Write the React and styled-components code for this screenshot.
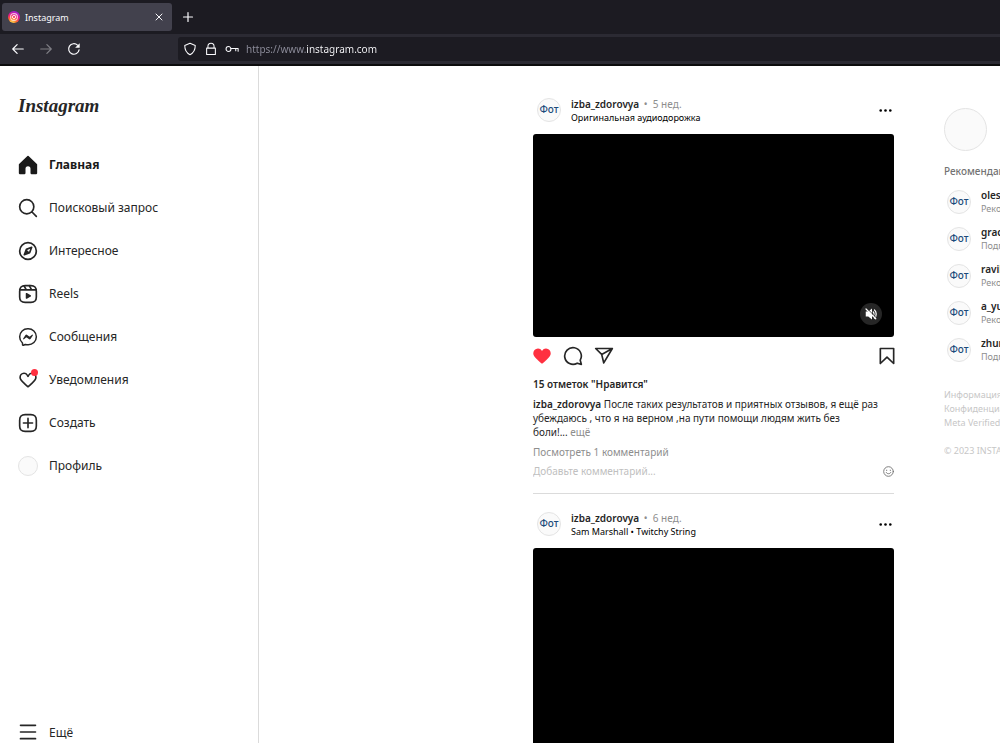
import React from 'react'
import styled, { createGlobalStyle } from 'styled-components'

const GlobalStyle = createGlobalStyle`
    *{
    box-sizing: border-box;
    }
    body{
    margin: 0;
    background: #ffffff;
    color: #262626;
    font-family: "Noto Sans", "Open Sans", sans-serif;
    font-size: 10px;
    }
    button, input{
    font-family: inherit;
    padding: 0;
    border: none;
    background: none;
    outline: none;
    }
    button{
    display: flex;
    color: inherit;
    cursor: pointer;
    }
    a{
    color: inherit;
    text-decoration: none;
    }
    svg{
    display: block;
    flex-shrink: 0;
    }
`

const Window = styled.div`
    display: flex;
    flex-direction: column;
    height: 100vh;
    overflow: hidden;
`

const TabBar = styled.div`
    display: flex;
    align-items: center;
    gap: 10px;
    height: 34px;
    flex-shrink: 0;
    padding: 0 2px;
    background: #1c1b22;
    color: #fbfbfe;
`

const Tab = styled.div`
    display: flex;
    align-items: center;
    gap: 5px;
    width: 170px;
    height: 28px;
    padding: 0 7px 0 6px;
    border-radius: 3px;
    background: #42414d;
    font-size: 9px;

    span{
    flex: 1;
    }
`

const Toolbar = styled.div`
    display: flex;
    align-items: center;
    height: 32px;
    flex-shrink: 0;
    background: #2b2a33;
    border-bottom: 2px solid #0c0c0d;
    color: #fbfbfe;
`

const NavButtons = styled.div`
    display: flex;
    gap: 14px;
    width: 178px;
    padding-left: 11px;
`

const ToolButton = styled.button`
    opacity: ${props => (props.disabled ? 0.4 : 1)};
`

const AddressBar = styled.div`
    display: flex;
    align-items: center;
    flex: 1;
    gap: 7px;
    height: 24px;
    padding-left: 5px;
    border-radius: 3px 0 0 3px;
    background: #1c1b22;
`

/* scheme and subdomain are dimmed, the domain is bright */
const AddressInput = styled.input`
    flex: 1;
    min-width: 0;
    font-size: 10px;
    color: transparent;
    background: linear-gradient(90deg, #8f8f9d 60px, #fbfbfe 60px);
    background-clip: text;
    -webkit-background-clip: text;
`

const Page = styled.div`
    display: flex;
    flex: 1;
    min-height: 0;
`

const Sidebar = styled.nav`
    display: flex;
    flex-direction: column;
    width: 259px;
    flex-shrink: 0;
    padding: 28px 18px 0;
    border-right: 1px solid #dbdbdb;
`

const Logo = styled.a`
    height: 27px;
    margin-bottom: 22px;
    line-height: 24px;
    font-family: "Liberation Serif", serif;
    font-size: 19px;
    font-style: italic;
    font-weight: bold;
`

const NavItem = styled.a`
    position: relative;
    display: flex;
    align-items: center;
    gap: 11px;
    height: 43px;
    font-size: 12px;
    font-weight: ${props => (props.$active ? 700 : 400)};
    color: ${props => (props.$active ? '#1a1a1a' : '#262626')};
`

const NavBottom = styled.div`
    margin-top: auto;

    button{
    align-items: center;
    gap: 11px;
    height: 22px;
    font-size: 12px;
    }
`

const Dot = styled.i`
    position: absolute;
    left: 13px;
    top: 11px;
    width: 7px;
    height: 7px;
    border-radius: 50%;
    background: #ff3040;
`

const Avatar = styled.span`
    display: flex;
    justify-content: center;
    flex-shrink: 0;
    width: ${props => props.$size}px;
    height: ${props => props.$size}px;
    border: 1px solid #e4e4e4;
    border-radius: 50%;
    background: #fafafa;
    color: #1c4a7a;
    font-size: 10px;
    font-weight: 500;
    line-height: 20px;
    white-space: nowrap;
`

const Content = styled.main`
    display: grid;
    grid-template-columns: 361px 56px;
    justify-content: end;
    column-gap: 50px;
    flex: 1;
    min-width: 0;
`

const Feed = styled.div`
    padding-top: 20px;
`

const Post = styled.article`
    padding-bottom: 15px;
    margin-bottom: 6px;
    border-bottom: 1px solid #dbdbdb;
`

const PostHeader = styled.header`
    display: flex;
    align-items: center;
    gap: 10px;
    height: 48px;
    padding: 0 2px 0 4px;
`

const PostTitle = styled.div`
    flex: 1;
    padding-top: 2px;
    line-height: 14px;

    div{
    font-size: 9px;
    line-height: 14px;
    color: #000000;
    }
`

const Name = styled.a`
    font-weight: 600;
    color: #262626;
`

const Muted = styled.span`
    color: #8e8e8e;
`

const Age = styled(Muted)`
    margin-left: 2px;
`

const Video = styled.div`
    display: flex;
    justify-content: flex-end;
    align-items: flex-end;
    height: ${props => props.$height}px;
    padding: 12px;
    border-radius: 3px;
    background: #000000;
`

const MuteButton = styled.button`
    align-items: center;
    justify-content: center;
    width: 22px;
    height: 22px;
    border-radius: 50%;
    background: #262626;
    color: #ffffff;
`

const Actions = styled.div`
    display: flex;
    align-items: center;
    gap: 11px;
    height: 38px;
    margin: 0 -3px 0 -1px;

    button:last-child{
    margin-left: auto;
    }
`

const Likes = styled.div`
    font-weight: 600;
    line-height: 18px;
    margin-bottom: 4px;
`

const Caption = styled.p`
    margin: 0 0 6px;
    line-height: 14px;
`

const CommentsLink = styled.a`
    display: block;
    margin-bottom: 5px;
    line-height: 14px;
    color: #8e8e8e;
`

const CommentForm = styled.form`
    display: flex;
    align-items: center;
    height: 14px;
    color: #737373;

    input{
    flex: 1;
    min-width: 0;
    font-size: 10px;
    }
    input::placeholder{
    color: #c0c0c0;
    }
`

const Aside = styled.aside`
    min-width: 0;
    padding-top: 42px;
    overflow: hidden;
    white-space: nowrap;
`

const AsideTitle = styled.h2`
    margin: 11px 0 3px;
    font-size: 10px;
    font-weight: 500;
    line-height: 18px;
    color: #737373;
`

const Suggestion = styled.div`
    display: flex;
    align-items: center;
    gap: 10px;
    height: 37px;
    padding-left: 3px;
    line-height: 14px;

    small{
    display: block;
    font-size: 9px;
    line-height: 14px;
    color: #8e8e8e;
    }
`

const Footer = styled.footer`
    display: flex;
    flex-direction: column;
    margin-top: 20px;
    font-size: 9px;
    line-height: 14px;
    color: #c7c7c7;

    p{
    margin: 14px 0 0;
    }
`

const Icon = ({ size = 20, width = 2, children }) => (
    <svg width={size} height={size} viewBox="0 0 24 24" fill="none" stroke="currentColor" strokeWidth={width} strokeLinecap="round" strokeLinejoin="round" aria-hidden="true">
        {children}
    </svg>
)

const ToolIcon = ({ size = 16, children }) => (
    <svg width={size} height={size} viewBox="0 0 16 16" fill="none" stroke="currentColor" strokeWidth="1.2" strokeLinecap="round" strokeLinejoin="round" aria-hidden="true">
        {children}
    </svg>
)

const heartPath = 'M16.792 3.904A4.989 4.989 0 0 1 21.5 9.122c0 3.072-2.652 4.959-5.197 7.222-2.512 2.243-3.865 3.469-4.303 3.752-.477-.309-2.143-1.823-4.303-3.752C5.141 14.072 2.5 12.167 2.5 9.122a4.989 4.989 0 0 1 4.708-5.218 4.21 4.21 0 0 1 3.675 1.941c.84 1.175.98 1.763 1.12 1.763s.278-.588 1.11-1.766a4.17 4.17 0 0 1 3.679-1.938Z'
const squarePath = 'M2 12v3.45c0 2.849.698 4.005 1.606 4.944.94.909 2.098 1.608 4.946 1.608h6.896c2.848 0 4.006-.7 4.946-1.608C21.302 19.455 22 18.3 22 15.45V8.552c0-2.849-.698-4.006-1.606-4.945C19.454 2.7 18.296 2 15.448 2H8.552c-2.848 0-4.006.699-4.946 1.607C2.698 4.547 2 5.703 2 8.552Z'

const Favicon = () => (
    <svg width="12" height="12" viewBox="0 0 24 24" fill="none" aria-hidden="true">
        <defs>
            <radialGradient id="insta" cx="0.3" cy="1.05" r="1.1">
                <stop offset="0.1" stopColor="#ffd54a" />
                <stop offset="0.4" stopColor="#ff6a2b" />
                <stop offset="0.65" stopColor="#ee1a7c" />
                <stop offset="1" stopColor="#9a1fe0" />
            </radialGradient>
        </defs>
        <circle cx="12" cy="12" r="12" fill="url(#insta)" />
        <rect x="5.5" y="5.5" width="13" height="13" rx="4" stroke="#fff" strokeWidth="1.8" />
        <circle cx="12" cy="12" r="3.2" stroke="#fff" strokeWidth="1.8" />
        <circle cx="15.8" cy="8.2" r="1" fill="#fff" />
    </svg>
)

const HomeIcon = () => (
    <Icon>
        <path fill="currentColor" stroke="none" d="M22 23h-6.001a1 1 0 0 1-1-1v-5.455a2.997 2.997 0 1 0-5.993 0V22a1 1 0 0 1-1 1H2a1 1 0 0 1-1-1V11.543a1.002 1.002 0 0 1 .31-.724l10-9.543a1.001 1.001 0 0 1 1.38 0l10 9.543a1.002 1.002 0 0 1 .31.724V22a1 1 0 0 1-1 1Z" />
    </Icon>
)

const SearchIcon = () => (
    <Icon>
        <path d="M19 10.5A8.5 8.5 0 1 1 10.5 2a8.5 8.5 0 0 1 8.5 8.5ZM16.511 16.511 22 22" />
    </Icon>
)

const ExploreIcon = () => (
    <Icon>
        <path d="m13.941 13.953-6.36 2.471 2.479-6.368 6.36-2.471Z" />
        <path fill="currentColor" stroke="none" d="m10.06 10.056 3.889 3.889-6.368 2.479Z" />
        <circle cx="12" cy="12" r="10" />
    </Icon>
)

const ReelsIcon = () => (
    <Icon>
        <path d="M2.049 7.002h19.9M13.504 2.001l2.858 5.001M7.207 2.11l2.795 4.892" />
        <path d={squarePath} />
        <path fill="currentColor" stroke="none" d="M9.763 17.664a.908.908 0 0 1-.454-.787V11.63a.909.909 0 0 1 1.364-.788l4.545 2.624a.909.909 0 0 1 0 1.575l-4.545 2.624a.91.91 0 0 1-.91 0Z" />
    </Icon>
)

const MessengerIcon = () => (
    <Icon>
        <path strokeWidth="1.8" d="M12.003 2.001a9.705 9.705 0 1 1 0 19.4 10.876 10.876 0 0 1-2.895-.384.798.798 0 0 0-.533.04l-1.984.876a.801.801 0 0 1-1.123-.708l-.054-1.78a.806.806 0 0 0-.27-.569 9.49 9.49 0 0 1-3.14-7.175 9.65 9.65 0 0 1 10-9.7Z" />
        <path fill="currentColor" stroke="none" d="M17.79 10.132a.659.659 0 0 0-.962-.873l-2.556 2.05a.63.63 0 0 1-.758.002L11.06 9.47a1.576 1.576 0 0 0-2.277.42l-2.567 3.98a.659.659 0 0 0 .961.875l2.556-2.049a.63.63 0 0 1 .759-.002l2.452 1.84a1.576 1.576 0 0 0 2.278-.42Z" />
    </Icon>
)

const HeartIcon = ({ liked }) => (
    <Icon>
        <path d={heartPath} fill={liked ? '#ff3040' : 'none'} stroke={liked ? '#ff3040' : 'currentColor'} />
    </Icon>
)

const CreateIcon = () => (
    <Icon>
        <path d={squarePath} />
        <path d="M6.545 12.001h10.91M12.003 6.545v10.91" />
    </Icon>
)

const navItems = [
    { label: 'Главная', icon: <HomeIcon />, active: true },
    { label: 'Поисковый запрос', icon: <SearchIcon /> },
    { label: 'Интересное', icon: <ExploreIcon /> },
    { label: 'Reels', icon: <ReelsIcon /> },
    { label: 'Сообщения', icon: <MessengerIcon /> },
    { label: 'Уведомления', icon: <HeartIcon />, badge: true },
    { label: 'Создать', icon: <CreateIcon /> },
    { label: 'Профиль', icon: <Avatar $size={20} /> },
]

const suggestions = [
    { name: 'olesya', note: 'Рекомендации' },
    { name: 'gracia', note: 'Подписан' },
    { name: 'ravil', note: 'Рекомендации' },
    { name: 'a_yulia', note: 'Рекомендации' },
    { name: 'zhurnal', note: 'Подписан' },
]

const FeedPost = ({ age, audio, height, children }) => (
    <Post>
        <PostHeader>
            <Avatar $size={24}>Фот</Avatar>
            <PostTitle>
                <Name href="#profile">izba_zdorovya</Name> <Age>•&nbsp; {age}</Age>
                <div>{audio}</div>
            </PostTitle>
            <button type="button" aria-label="Другие варианты">
                <svg width="13" height="13" viewBox="0 0 13 13" fill="#000000" aria-hidden="true">
                    <circle cx="1.7" cy="6.5" r="1.3" />
                    <circle cx="6.5" cy="6.5" r="1.3" />
                    <circle cx="11.3" cy="6.5" r="1.3" />
                </svg>
            </button>
        </PostHeader>
        <Video $height={height}>
            <MuteButton type="button" aria-label="Включить звук">
                <svg width="12" height="12" viewBox="0 0 48 48" fill="none" aria-hidden="true">
                    <path fill="currentColor" d="M3 14h10L28 2v44L13 34H3Z" />
                    <path stroke="currentColor" strokeWidth="5" strokeLinecap="round" d="M33 16c4 4 4 12 0 16M38 8c9 8 9 24 0 32" />
                    <path stroke="#262626" strokeWidth="4" d="m8 2 38 38" />
                    <path stroke="currentColor" strokeWidth="5" strokeLinecap="round" d="m4 4 39 39" />
                </svg>
            </MuteButton>
        </Video>
        {children}
    </Post>
)

const App = () => {
    return (
        <Window>
            <GlobalStyle />
            <TabBar>
                <Tab>
                    <Favicon />
                    <span>Instagram</span>
                    <ToolButton type="button" aria-label="Закрыть вкладку">
                        <ToolIcon size={12}><path strokeWidth="1.3" d="m4 4 8 8M12 4l-8 8" /></ToolIcon>
                    </ToolButton>
                </Tab>
                <ToolButton type="button" aria-label="Новая вкладка">
                    <ToolIcon size={12}><path strokeWidth="1.6" d="M8 2v12M2 8h12" /></ToolIcon>
                </ToolButton>
            </TabBar>
            <Toolbar>
                <NavButtons>
                    <ToolButton type="button" aria-label="Назад">
                        <ToolIcon size={14}><path strokeWidth="1.4" d="M14 8H2.5M7 3 2 8l5 5" /></ToolIcon>
                    </ToolButton>
                    <ToolButton type="button" aria-label="Вперёд" disabled>
                        <ToolIcon size={14}><path strokeWidth="1.4" d="M2 8h11.5M9 3l5 5-5 5" /></ToolIcon>
                    </ToolButton>
                    <ToolButton type="button" aria-label="Обновить">
                        <ToolIcon size={14}>
                            <path strokeWidth="1.4" d="M13.8 9A6 6 0 1 1 12 3.6" />
                            <path fill="currentColor" stroke="none" d="M14.5 1.5v5.2H9.3Z" />
                        </ToolIcon>
                    </ToolButton>
                </NavButtons>
                <AddressBar>
                    <ToolIcon size={14}><path d="M8 1.5 14 4c0 5-1.8 8.5-6 10.5C3.8 12.500 2 9 2 4Z" /></ToolIcon>
                    <ToolIcon size={14}><path d="M4.5 7V5a3.500 3.500 0 0 1 7 0v2M3 7h10v7.300H3Z" /></ToolIcon>
                    <ToolIcon size={14}>
                        <circle cx="4" cy="8" r="2.8" />
                        <path d="M6.8 7.500H15v3M12.300 7.500V10" />
                    </ToolIcon>
                    <AddressInput aria-label="Адрес" defaultValue="https://www.instagram.com" spellCheck="false" />
                </AddressBar>
            </Toolbar>
            <Page>
                <Sidebar>
                    <Logo href="#home">Instagram</Logo>
                    {navItems.map(item => (
                        <NavItem key={item.label} href="#nav" $active={item.active}>
                            {item.icon}
                            {item.badge && <Dot />}
                            {item.label}
                        </NavItem>
                    ))}
                    <NavBottom>
                        <button type="button">
                            <Icon><path d="M3 4h18M3 12h18M3 20h18" /></Icon>
                            Ещё
                        </button>
                    </NavBottom>
                </Sidebar>
                <Content>
                    <Feed>
                        <FeedPost age="5 нед." audio="Оригинальная аудиодорожка" height={203}>
                            <Actions>
                                <button type="button" aria-label="Не нравится"><HeartIcon liked /></button>
                                <button type="button" aria-label="Комментировать">
                                    <Icon><path d="M20.656 17.008a9.993 9.993 0 1 0-3.59 3.615L22 22Z" /></Icon>
                                </button>
                                <button type="button" aria-label="Поделиться">
                                    <Icon><path d="M22 3 9.218 10.083M11.698 20.334 22 3.001H2l7.218 7.083Z" /></Icon>
                                </button>
                                <button type="button" aria-label="Сохранить">
                                    <Icon><path d="m20 21-8-7.56L4 21V3h16Z" /></Icon>
                                </button>
                            </Actions>
                            <Likes>15 отметок "Нравится"</Likes>
                            <Caption>
                                <Name href="#profile">izba_zdorovya</Name> После таких результатов и приятных отзывов, я ещё раз убеждаюсь , что я на верном ,на пути помощи людям жить без
                                <br />
                                боли!... <Muted>ещё</Muted>
                            </Caption>
                            <CommentsLink href="#comments">Посмотреть 1 комментарий</CommentsLink>
                            <CommentForm>
                                <input aria-label="Добавьте комментарий" placeholder="Добавьте комментарий..." />
                                <button type="button" aria-label="Эмодзи">
                                    <Icon size={11}>
                                        <circle cx="12" cy="12" r="10.5" />
                                        <path d="M7 14c1.5 4 8.5 4 10 0M8 9v1M16 9v1" />
                                    </Icon>
                                </button>
                            </CommentForm>
                        </FeedPost>
                        <FeedPost age="6 нед." audio="Sam Marshall • Twitchy String" height={451} />
                    </Feed>
                    <Aside>
                        <Avatar $size={43} />
                        <AsideTitle>Рекомендации для вас</AsideTitle>
                        {suggestions.map(user => (
                            <Suggestion key={user.name}>
                                <Avatar $size={24}>Фот</Avatar>
                                <div>
                                    <Name href="#profile">{user.name}</Name>
                                    <small>{user.note}</small>
                                </div>
                            </Suggestion>
                        ))}
                        <Footer>
                            <a href="#info">Информация</a>
                            <a href="#privacy">Конфиденциальность</a>
                            <a href="#verified">Meta Verified</a>
                            <p>© 2023 INSTAGRAM</p>
                        </Footer>
                    </Aside>
                </Content>
            </Page>
        </Window>
    )
}

export default App
